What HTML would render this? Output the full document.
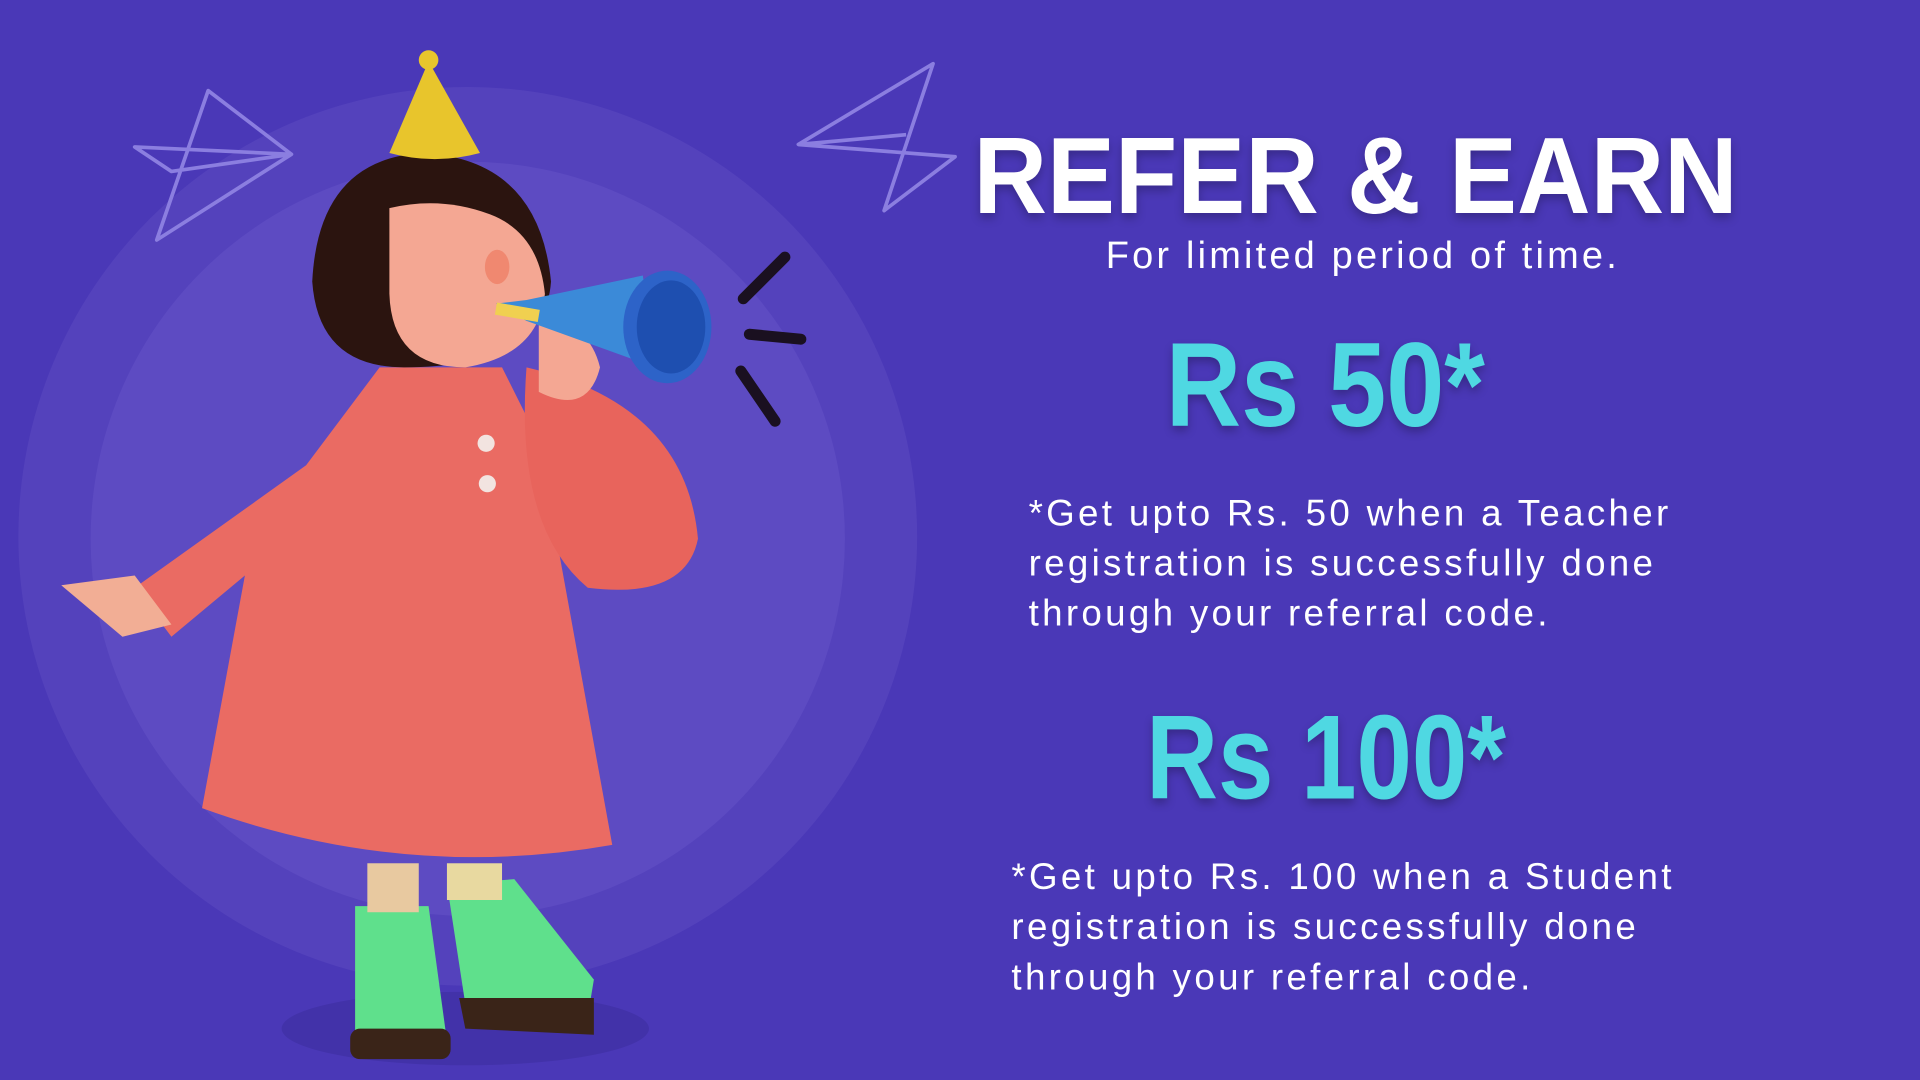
<!DOCTYPE html>
<html><head><meta charset="utf-8"><style>
html,body{margin:0;padding:0;width:1920px;height:1080px;overflow:hidden;background:#4a38b7}
#w{position:absolute;left:0;top:0;width:1568px;height:882px;transform:scale(1.22449);transform-origin:0 0;font-family:"Liberation Sans",sans-serif}
.t{position:absolute;white-space:nowrap;color:#fff}
.h{left:795px;top:92px;font-size:89px;font-weight:bold;letter-spacing:0;transform-origin:0 0;transform:scaleX(.935);text-shadow:0 4px 8px rgba(0,0,0,.25)}
.s{left:0;width:2226px;text-align:center;top:191px;font-size:31px;letter-spacing:2.6px}
.rs{font-weight:bold;color:#4fd8e2;font-size:98px;transform-origin:0 0;text-shadow:0 4px 8px rgba(0,0,0,.25)}
.p{font-size:30px;line-height:41px;letter-spacing:2.7px}
</style></head><body><div id="w">
<svg width="1568" height="882" style="position:absolute;left:0;top:0">
<circle cx="382" cy="438" r="367" fill="#5442bc"/>
<circle cx="382" cy="440" r="308" fill="#5d4bc2"/>
<g fill="none" stroke="#8b7ee0" stroke-width="3" stroke-linejoin="round">
<path d="M110 120 L238 126 L128 196 L170 74 L238 126 L140 140 Z"/>
<path d="M652 118 L780 128 L722 172 L762 52 L652 118 L740 110"/>
</g>
<ellipse cx="380" cy="840" rx="150" ry="30" fill="#3d2ea0" opacity=".6"/>
<path d="M290 740 L350 740 L365 850 L290 855 Z" fill="#5fe08c"/>
<path d="M365 722 L420 718 L485 800 L480 830 L380 820 Z" fill="#5fe08c"/>
<rect x="286" y="840" width="82" height="25" rx="8" fill="#3a2418"/>
<path d="M375 815 L485 815 L485 845 L380 840 Z" fill="#3a2418"/>
<rect x="300" y="705" width="42" height="40" fill="#e8c9a0"/>
<rect x="365" y="705" width="45" height="30" fill="#e8d9a0"/>
<path d="M310 300 L410 300 L440 360 L500 690 Q330 720 165 660 L200 470 L140 520 L110 480 L250 380 Z" fill="#ea6b63"/>
<path d="M430 300 Q560 330 570 440 Q560 490 480 480 Q420 430 430 300 Z" fill="#e8645c"/>
<path d="M50 478 L110 470 L140 510 L100 520 Z" fill="#f2ae95"/>
<circle cx="397" cy="362" r="7" fill="#f2e4e0"/><circle cx="398" cy="395" r="7" fill="#f2e4e0"/>
<path d="M255 230 Q260 130 345 125 Q440 130 450 230 Q445 300 330 300 Q260 300 255 230 Z" fill="#2b140f"/>
<path d="M318 170 Q360 160 400 175 Q440 190 445 240 Q440 290 380 300 Q320 300 318 240 Z" fill="#f4a793"/>
<ellipse cx="406" cy="218" rx="10" ry="14" fill="#f08870"/>
<path d="M440 265 Q480 260 490 300 Q480 340 440 320 Z" fill="#f4a793"/>
<path d="M350 50 L392 125 Q355 135 318 125 Z" fill="#e8c52c"/>
<circle cx="350" cy="49" r="8" fill="#e8c52c"/>
<path d="M405 248 L430 245 L525 225 L535 300 L430 262 Z" fill="#3b8ad8"/>
<ellipse cx="545" cy="267" rx="36" ry="46" fill="#2d63c8"/>
<ellipse cx="548" cy="267" rx="28" ry="38" fill="#1e4fb0"/>
<path d="M405 252 L440 258" stroke="#f0d050" stroke-width="10"/>
<g stroke="#1a1020" stroke-width="9" stroke-linecap="round">
<path d="M607 244 L641 210"/><path d="M612 273 L654 277"/><path d="M605 303 L633 344"/>
</g>
</svg>
<div class="t h">REFER &amp; EARN</div>
<div class="t s">For limited period of time.</div>
<div class="t rs" style="left:952px;top:258px;transform:scaleX(.87)">Rs 50*</div>
<div class="t p" style="left:840px;top:399px">*Get upto Rs. 50 when a Teacher<br>registration is successfully done<br>through your referral code.</div>
<div class="t rs" style="left:936px;top:562px;transform:scaleX(.83)">Rs 100*</div>
<div class="t p" style="left:826px;top:696px">*Get upto Rs. 100 when a Student<br>registration is successfully done<br>through your referral code.</div>
</div></body></html>
